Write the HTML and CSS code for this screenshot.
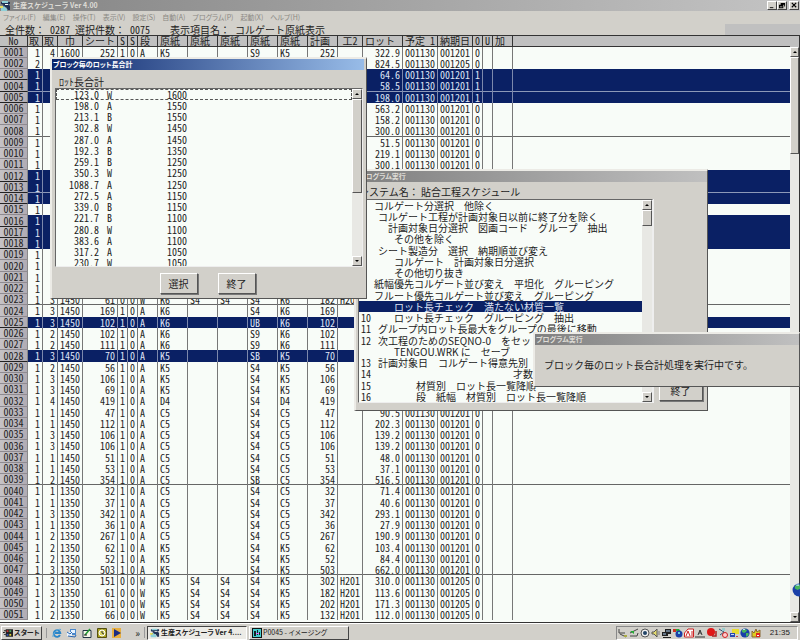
FILE: index.html
```html
<!DOCTYPE html>
<html lang="ja">
<head>
<meta charset="utf-8">
<title>生産スケジューラ Ver 4.00</title>
<link rel="stylesheet" href="styles.css">
</head>
<body>
<svg class="defs" aria-hidden="true">
  <symbol id="app" viewBox="0 0 11 10"><path fill="#235" d="M1 1h9v2H8l2 2v4H8L6 6 4 7 2 9H1V6l3-2-3-1z"/><path fill="#8fd0d8" d="M2 0h6v2H2zM1 7l3-2 3 3v2H1z"/><path fill="#e8e060" d="M0 5h3v2H0z"/><path fill="#fff" d="M5 3h3v1H5z"/></symbol>
  <symbol id="globe" viewBox="0 0 10 10"><circle cx="5" cy="5" r="4.6" fill="#1a3fa8"/><path fill="#49b45c" d="M2 2l3-1 2 1-1 2-2 1-2-1zM6 5l2 0 1 1-2 3-1-1z"/><path fill="#b8e0f0" d="M3 1h2v1H3z"/></symbol>
</svg>
<div class="app">
  <header class="titlebar">
    <svg class="logo"><use href="#app"/></svg>
    <h1>生産スケジューラ Ver 4.00</h1>
    <div class="winbtns">
      <button aria-label="最小化"><svg viewBox="0 0 9 8"><path d="M2 6h4v1H2z"/></svg></button>
      <button aria-label="元に戻す"><svg viewBox="0 0 9 8"><path d="M3 1h5v4H7V3H3zM1 3h5v4H1zM2 5v1h3V5z" fill-rule="evenodd"/></svg></button>
      <button aria-label="閉じる" class="close"><svg viewBox="0 0 9 8"><path d="M2 1l5 5M7 1L2 6" stroke="#000" stroke-width="1.3"/></svg></button>
    </div>
  </header>
  <nav class="menu">
    <button>ファイル(F)</button><button>編集(E)</button><button>操作(T)</button><button>表示(V)</button><button>設定(S)</button><button>自動(A)</button><button>プログラム(P)</button><button>起動(X)</button><button>ヘルプ(H)</button>
  </nav>
  <div class="info">
    <p><span>全件数：</span> <b>0287</b> <span>選択件数：</span> <b>0075</b> <span class="item">表示項目名：</span> <span>コルゲート原紙表示</span></p>
    <div class="patch"></div>
  </div>
  <main class="grid">
    <div class="tablebox">
      <table>
        <colgroup><col class="w28"><col class="w15"><col class="w15"><col class="w25"><col class="w35"><col class="w10"><col class="w10"><col class="w20"><col class="w30"><col class="w30"><col class="w30"><col class="w30"><col class="w30"><col class="w30"><col class="w25"><col class="w40"><col class="w35"><col class="w35"><col class="w10"><col class="w10"><col class="w20"><col></colgroup>
        <thead><tr><th class="c">No</th><th>取</th><th>取</th><th class="c">巾</th><th>シート</th><th>S</th><th>S</th><th>段</th><th>原紙</th><th>原紙</th><th>原紙</th><th>原紙</th><th>原紙</th><th>計画</th><th class="c">工２</th><th>ロット</th><th>予定 1</th><th>納期日</th><th>0</th><th>U</th><th>加</th><th></th></tr></thead>
        <tbody id="rows"></tbody>
      </table>
    </div>
    <div class="scroll main">
      <button class="up" aria-label="上へ"></button><div class="thumb"></div><div class="track"></div><button class="down" aria-label="下へ"></button>
    </div>
  </main>
  <footer class="taskbar">
    <button class="start"><svg viewBox="0 0 11 10"><path fill="#222" d="M0 4h2v1H0zM1 6h2v1H1zM1 2h2v1H1zM3 1l8 0v8l-8 0z"/><path fill="#c33" d="M4 2h2v2H4z"/><path fill="#4a6" d="M7 2h2v2H7z"/><path fill="#35b" d="M4 6h2v2H4z"/><path fill="#dc3" d="M7 6h2v2H7z"/></svg>スタート</button>
    <div class="quick">
      <svg viewBox="0 0 10 10"><path d="M8 7A3.3 3.3 0 1 1 8.300 5H3" fill="none" stroke="#2b86c8" stroke-width="1.800"/><path d="M1 9C0 6 6 0 9 1.500" fill="none" stroke="#58a8dc"/></svg>
      <svg viewBox="0 0 10 10"><path fill="#4a88cc" d="M3 1h6v6H3z"/><path fill="#e8f4ff" d="M4 2h4v3H4zM0 4h5v4H0z"/><path d="M0 4l3 2 2-2M1 8l7 1 1-2" fill="none" stroke="#2864b0"/></svg>
      <svg viewBox="0 0 10 10"><path fill="#f4f6e8" stroke="#234" d="M1 2.500h8v7H1z"/><path d="M3 7l5-6" stroke="#293" stroke-width="1.500"/><path d="M2 7h3" stroke="#222"/></svg>
      <svg viewBox="0 0 10 10"><path fill="#a8a020" stroke="#555010" d="M.5.5h9v9h-9z"/><circle cx="5" cy="5" r="3" fill="#d8d460" stroke="#fff"/><path d="M5 3v2l2 1" fill="none" stroke="#333"/></svg>
      <svg viewBox="0 0 10 10"><path fill="#e8b040" d="M0 0h9v10H0z"/><path fill="#1c2c80" d="M2 1l7 4-7 4z"/></svg>
    </div>
    <span class="more">»</span>
    <button class="task on"><svg viewBox="0 0 11 10"><use href="#app"/></svg>生産スケジューラ Ver 4....</button>
    <button class="task"><svg viewBox="0 0 10 10"><path fill="#111" d="M0 0h10v10H0z"/><path fill="#4cc" d="M1 1h8v8H1z"/><path fill="#122" d="M2 3h2v5H2zM5 2h1v5H5zM7 4h1v3H7z"/><path fill="#e6f" d="M4 5h3v1H4z"/></svg><span>P0045 - イメージング</span></button>
    <div class="tray">
      <svg viewBox="0 0 10 10"><path d="M1 1v4h6M2 6l6 3" fill="none" stroke="#444"/><path fill="#aa4" d="M6 7h3v2H6z"/></svg>
      <svg viewBox="0 0 10 10"><path d="M1 5l4-2 4-2M1 8h7l1-3" fill="none" stroke="#444"/><path fill="#2a3" d="M1 3l4 0 0 3z"/></svg>
      <svg viewBox="0 0 10 10"><circle cx="5" cy="5" r="4" fill="#eee" stroke="#555"/><circle cx="5" cy="5" r="2" fill="#246"/></svg>
      <svg viewBox="0 0 10 10"><path d="M1 4h2l3-3v8L3 6H1z" fill="#e6dd70" stroke="#555"/><path d="M8 3v4" stroke="#777"/></svg>
      <svg viewBox="0 0 10 10"><path fill="#222" d="M3 1h6v5H3zM0 4h6v4H0zM1 9h8v1H1z"/><path fill="#678" d="M4 2h4v2H4zM1 5h3v2H1z"/></svg>
      <svg viewBox="0 0 10 10"><path fill="#2a3" d="M2 1h4l3 4-3 2z"/><circle cx="6" cy="6" r="3.500" fill="#1a3fa8"/><path fill="#c32" d="M0 1h3v3H0z"/><path fill="#6cd" d="M5 4h2v2H5z"/></svg>
      <svg viewBox="0 0 10 10"><path fill="#fff" stroke="#c22" d="M.5 5L4 1h5.500v8h-9z"/><path d="M2 8l2-5 2 5M8 3v5" fill="none" stroke="#c22"/></svg>
      <svg viewBox="0 0 10 10"><path d="M3 7l2-5 2 5M4 5h2M0 9h10" fill="none" stroke="#333"/></svg>
      <svg viewBox="0 0 10 10"><circle cx="4" cy="4" r="4" fill="#e01818"/><path d="M9 3v5H5" fill="none" stroke="#a22" stroke-width="1.500"/></svg>
      <svg viewBox="0 0 10 10"><path d="M1 1l5 3-4 3" fill="none" stroke="#357"/><path fill="#9cc" d="M4 0h3v3H4z"/><circle cx="7" cy="7" r="2.500" fill="#fcc" stroke="#c22"/></svg>
      <svg viewBox="0 0 10 10"><path fill="#e8dc30" d="M3 1h7v5H3z"/><path fill="#2848b0" d="M1 5h5v4H1z"/><path fill="#cde" d="M2 6h3v1H2z"/><path fill="#c44" d="M7 8h2v1H7z"/></svg>
      <svg viewBox="0 0 10 10"><use href="#globe"/></svg>
      <svg viewBox="0 0 10 10"><path fill="#e0cc20" stroke="#863" d="M1 3l2 2 2-4 1 3 3-2v7H1z"/><path fill="#d22" d="M5 5h4v4H5z"/><path fill="#fff" d="M6 7h2v1H6z"/></svg>
      <time>21:35</time>
    </div>
  </footer>

  <section class="win exec" aria-label="プログラム実行">
    <h2 class="cap">プログラム実行</h2>
    <p class="sys">システム名： 貼合工程スケジュール</p>
    <div class="cols">
      <div class="listbox">
        <ol class="prog">
          <li class="i0">コルゲート分選択　他除く</li>
          <li class="i1">コルゲート工程が計画対象日以前に終了分を除く</li>
          <li class="i2">計画対象日分選択　図画コード　グループ　抽出</li>
          <li class="i3">その他を除く</li>
          <li class="i1">シート製造分　選択　納期順並び変え</li>
          <li class="i3">コルゲート　計画対象日分選択</li>
          <li class="i3">その他切り抜き</li>
          <li class="i0">紙幅優先コルゲート並び変え　平坦化　グルーピング</li>
          <li class="i0">フルート優先コルゲート並び変え　グルーピング</li>
          <li class="i3 sel">ロット長チェック　満たない材質一覧</li>
          <li class="i3"><i>10</i>ロット長チェック　グルーピング　抽出</li>
          <li class="i1"><i>11</i>グループ内ロット長最大をグループの最後に移動</li>
          <li class="i1"><i>12</i>次工程のためのSEQNO-0　をセッ</li>
          <li class="i3">TENGOU.WRK に　セーブ</li>
          <li class="i1"><i>13</i>計画対象日　コルゲート得意先別</li>
          <li class="i5"><i>14</i>才数</li>
          <li class="i4"><i>15</i>材質別　ロット長一覧降順</li>
          <li class="i4"><i>16</i>段　紙幅　材質別　ロット長一覧降順</li>
        </ol>
        <div class="scroll"><button class="up" aria-label="上へ"></button><div class="thumb"></div><div class="track"></div><button class="down" aria-label="下へ"></button></div>
      </div>
      <div class="side"><button class="btn">終了</button></div>
    </div>
  </section>

  <section class="win lots" aria-label="ブロック毎のロット長合計">
    <h2 class="cap active">ブロック毎のロット長合計</h2>
    <p class="lbl">ﾛｯﾄ長合計</p>
    <div class="listbox">
      <ul class="lotlist" id="lots"></ul>
      <div class="scroll"><button class="up" aria-label="上へ"></button><div class="thumb"></div><div class="track"></div><button class="down" aria-label="下へ"></button></div>
    </div>
    <div class="actions"><button class="btn">選択</button><button class="btn">終了</button></div>
  </section>

  <section class="win busy" aria-label="プログラム実行中">
    <h2 class="cap">プログラム実行</h2>
    <p>ブロック毎のロット長合計処理を実行中です。</p>
  </section>
  <svg class="ball" viewBox="0 0 10 10"><use href="#globe"/></svg>
</div>
<script src="data.js"></script>
</body>
</html>
```
FILE: data.js
```js
// Columns: take1, take2, width, sheet, S, S, flute, five papers, plan, work2, lot, planned, due, flag
const lines = `1,4,1600,252,1,0,A,K5,,,S9,K5,252,,322.9,001130,001201,0
2,,,,,,,,,,,,,,824.5,001130,001205,0
1,,,,,,,,,,,,,,64.6,001130,001201,1
1,,,,,,,,,,,,,,58.5,001130,001201,1
1,,,,,,,,,,,,,,198.0,001130,001201,1
1,,,,,,,,,,,,,,563.2,001130,001201,0
1,,,,,,,,,,,,,,158.2,001130,001201,0
1,,,,,,,,,,,,,,300.0,001130,001201,0
1,,,,,,,,,,,,,,51.5,001130,001201,0
1,,,,,,,,,,,,,,219.1,001130,001201,0
1,,,,,,,,,,,,,,300.1,001130,001201,0
1
1
1
1
1
1
1
1
1
1
1
1,3,1450,61,0,0,W,K6,S4,S4,S4,K6,182,H201
1,3,1450,169,1,0,A,K6,,,S4,K6,169
1,3,1450,102,1,0,A,K6,,,UB,K6,102
1,2,1450,102,1,0,A,K6,,,S9,K6,102
1,2,1450,111,1,0,A,K6,,,S9,K6,111
1,3,1450,70,1,0,A,K5,,,SB,K5,70
1,2,1450,56,1,0,A,K5,,,S4,K5,56
1,3,1450,106,1,0,A,K5,,,S4,K5,106
1,3,1450,69,1,0,A,K5,,,S4,K5,69
1,4,1450,419,1,0,A,D4,,,S4,D4,419
1,1,1450,47,1,0,A,C5,,,S4,C5,47,,90.5,001130,001201,0
1,1,1450,112,1,0,A,C5,,,S4,C5,112,,202.3,001130,001201,0
1,3,1450,106,1,0,A,C5,,,S4,C5,106,,139.2,001130,001201,0
1,3,1450,106,1,0,A,C5,,,S4,C5,106,,139.2,001130,001201,0
1,1,1450,51,1,0,A,C5,,,S4,C5,51,,48.0,001130,001201,0
1,1,1450,53,1,0,A,C5,,,S4,C5,53,,37.1,001130,001201,0
1,2,1450,354,1,0,A,C5,,,SB,C5,354,,516.5,001130,001201,0
1,1,1350,32,1,0,A,C5,,,S4,C5,32,,71.4,001130,001201,0
1,1,1350,37,1,0,A,C5,,,S4,C5,37,,40.6,001130,001201,0
1,3,1350,342,1,0,A,C5,,,S4,C5,342,,293.1,001130,001201,0
1,1,1350,36,1,0,A,C5,,,S4,C5,36,,27.9,001130,001201,0
1,2,1350,267,1,0,A,C5,,,S4,C5,267,,190.9,001130,001201,0
1,2,1350,62,1,0,A,K5,,,S4,K5,62,,103.4,001130,001201,0
1,2,1350,52,1,0,A,K5,,,S4,K5,52,,84.4,001130,001201,0
1,3,1350,503,1,0,A,K5,,,S4,K5,503,,662.0,001130,001201,0
1,2,1350,151,0,0,W,K5,S4,S4,S4,K5,302,H201,310.0,001130,001205,0
1,3,1350,61,0,0,W,K5,S4,S4,S4,K5,182,H201,113.6,001130,001205,0
1,2,1350,101,0,0,W,K5,S4,S4,S4,K5,202,H201,171.3,001130,001205,0
1,2,1350,66,0,0,W,K5,S4,S4,S4,K5,132,H201,112.0,001130,001205,0`.split('\n');
const selected = [3, 4, 5, 12, 13, 14, 16, 17, 18, 25, 28];
const ruled = [4, 8, 13, 23, 39, 47];
const right = [0, 1, 2, 3, 12, 14];
const center = [4, 5, 17];
document.getElementById('rows').innerHTML = lines.map((line, n) => {
  const v = line.split(',');
  let cells = '';
  for (let i = 0; i < 21; i++) {
    const cls = right.includes(i) ? 'r' : center.includes(i) ? 'c' : 'l';
    cells += `<td class="${cls}">${v[i] || ''}</td>`;
  }
  const cls = (selected.includes(n + 1) ? 'sel ' : '') + (ruled.includes(n + 1) ? 'rule' : '');
  return `<tr class="${cls}"><th scope="row">${String(n + 1).padStart(4, '0')}</th>${cells}</tr>`;
}).join('');

const lots = '123.0 W 1600,198.0 A 1550,213.1 B 1550,302.8 W 1450,287.0 A 1450,192.3 B 1350,259.1 B 1250,350.3 W 1250,1088.7 A 1250,272.5 A 1150,339.0 B 1150,221.7 B 1100,280.8 W 1100,383.6 A 1100,317.2 A 1050,230.7 W 1050';
document.getElementById('lots').innerHTML = lots.split(',').map(t => {
  const [a, b, c] = t.split(' ');
  return `<li><span>${a}</span><span>${b}</span><span>${c}</span></li>`;
}).join('');
```
FILE: styles.css
```css
:root {
  --face: #d2d0ca;
  --navy: #0a2064;
  --paper: #f8fcf8;
  --jp: "Noto Sans CJK JP", sans-serif;
}
* { box-sizing: border-box; }
body { margin: 0; font: 10px/11px var(--jp); color: #222; }
button { font: inherit; color: inherit; border: 0; padding: 0; margin: 0; background: none; }
h1, h2, p, ul, ol { margin: 0; padding: 0; font-size: inherit; }
ul, ol { list-style: none; }
b, i { font: 10px/11px var(--jp); font-feature-settings: "hwid"; }
.defs { position: absolute; width: 0; height: 0; }
.app { position: relative; height: 100vh; overflow: hidden; display: flex; flex-direction: column; background: var(--face); }

.titlebar { display: flex; align-items: center; height: 11px; background: linear-gradient(90deg, #848484, #c4c4c4); color: #dedcd6; }
.logo { width: 11px; height: 10px; margin-right: 2px; }
.titlebar h1 { font: bold 7px/11px var(--jp); flex: 1; }
.winbtns { display: flex; padding-right: 1px; }
.winbtns button { width: 10px; height: 9px; background: var(--face); border: 1px solid; border-color: #fff #444 #444 #fff; display: flex; }
.winbtns svg { width: 8px; height: 7px; }
.winbtns .close { margin-left: 2px; }

.menu { display: flex; gap: 7px; padding-left: 3px; height: 13px; font-size: 7px; line-height: 13px; color: #8a8883; font-feature-settings: "palt"; white-space: nowrap; }
.info { display: flex; height: 11px; justify-content: space-between; }
.info p { padding-left: 5px; display: flex; gap: 5px; white-space: nowrap; }
.info .item { padding-left: 15px; }
.patch { width: 75px; background: #c0c0c0; }

.grid { flex: 1; min-height: 0; display: flex; background: var(--paper); border-top: 1px solid #333; border-bottom: 1px solid #333; }
.tablebox { flex: 1; overflow: hidden; }
table { width: 100%; table-layout: fixed; border-collapse: separate; border-spacing: 0; font: 10px/10px var(--jp); font-feature-settings: "hwid"; }
.w10 { width: 10px; } .w15 { width: 15px; } .w20 { width: 20px; } .w25 { width: 25px; } .w28 { width: 28px; }
.w30 { width: 30px; } .w35 { width: 35px; } .w40 { width: 40px; }
th, td { padding: 0 2px; white-space: nowrap; font-weight: normal; border-right: 1px solid #777; text-align: left; }
td:last-child, thead th:last-child { border-right: 0; }
thead th { height: 11px; background: #c0c0c0; border-bottom: 1px solid #333; border-right-color: #333; padding: 0 2px; }
thead th:nth-child(-n+3) { padding: 0 1px; }
th.c, td.c { text-align: center; padding: 0; }
td.r { text-align: right; }
tbody tr { height: 11px; }
tbody tr:nth-child(4n) { height: 12px; }
tbody th { background: linear-gradient(90deg, #c6c2c6, #b0acb4); border-right-color: #888; border-bottom: 1px solid #8e8a90; text-align: center; line-height: 10px; }
tbody .sel { background: var(--navy); color: #dfe4f4; }
tbody .sel th { color: #222; border-bottom-color: #222; }
.sel td { border-right-color: #7c88ac; }
.rule td { box-shadow: inset 0 -1px #666; }
.sel.rule td { box-shadow: inset 0 -1px #8c98b8; }

.scroll { width: 10px; flex: none; display: flex; flex-direction: column; background: #e8e8e4; }
.scroll.main { border-right: 1px solid #333; padding-top: 11px; background: linear-gradient(#c0c0c0 11px, #e8e8e4 11px); }
.scroll button, .thumb { background: var(--face); border: 1px solid; border-color: #fff #555 #555 #fff; }
.scroll button { height: 10px; display: grid; place-items: center; }
.scroll button::before { content: ""; border: 2px solid transparent; border-top: 0; border-bottom: 2px solid #000; }
.scroll .down::before { border-bottom: 0; border-top: 2px solid #000; }
.track { flex: 1; }
.main .thumb { height: 97px; }

.taskbar { display: flex; align-items: center; height: 17px; padding: 2px 2px 1px 1px; border-top: 1px solid #fff; font-size: 7px; font-feature-settings: "palt"; }
.taskbar svg { width: 10px; height: 10px; flex: none; }
.start, .task { height: 14px; display: flex; align-items: center; border: 1px solid; border-color: #fff #444 #444 #fff; white-space: nowrap; }
.start { width: 41px; padding-left: 1px; gap: 1px; font-weight: bold; }
.quick { display: flex; gap: 5px; margin-left: 4px; padding-left: 5px; border-left: 1px solid #999; }
.more { width: 17px; margin: 0 2px 0 6px; font-size: 10px; text-align: right; border-right: 1px solid #999; padding-right: 4px; }
.task { width: 100px; padding-left: 2px; gap: 1px; margin-right: 2px; }
.task.on { border-color: #444 #fff #fff #444; background: #ecebe6; font-weight: bold; }
.tray { margin-left: auto; width: 182px; height: 14px; display: flex; align-items: center; justify-content: space-between; padding: 0 7px 0 1px; border: 1px solid; border-color: #888 #fff #fff #888; }
.tray time { margin-left: 8px; font: 8px/12px "Liberation Sans", sans-serif; }

.win { position: absolute; background: var(--face); border: 2px solid; border-color: #ecebe6 #555 #555 #ecebe6; border-right-width: 1px; border-bottom-width: 1px; }
.cap { height: 11px; padding-left: 1px; font: bold 7px/11px var(--jp); color: #dedcd6; background: linear-gradient(90deg, #808080, #c0c0c0); white-space: nowrap; font-feature-settings: "palt"; }
.cap.active { background: linear-gradient(90deg, #0a246a, #98bce8); color: #fff; }
.listbox { display: flex; overflow: hidden; background: var(--paper); border: 1px solid; border-color: #666 #eee #eee #666; }
.listbox ul, .listbox ol { flex: 1; }
.listbox li { height: 11px; line-height: 11px; white-space: nowrap; }
.listbox li:nth-child(4n) { height: 12px; }
.btn { background: var(--face); border: 1px solid; border-color: #fff #555 #555 #fff; box-shadow: 1px 1px #777; height: 21px; }

.lots { left: 50px; top: 57px; width: 317px; height: 242px; display: flex; flex-direction: column; padding-right: 3px; }
.lots .cap { margin-right: -1px; }
.lbl { padding: 6px 0 1px 7px; }
.lots .listbox { height: 179px; margin: 0 0 0 3px; }
.lotlist { font-feature-settings: "hwid"; }
.lotlist li { display: grid; grid-template-columns: 43px 52px 1fr; column-gap: 8px; }
.lotlist li span:first-child { text-align: right; }
.lotlist li:first-child { outline: 1px dashed #555; outline-offset: -1px; }
.lots .thumb { height: 94px; }
.actions { display: flex; gap: 20px; justify-content: center; padding-top: 6px; }
.actions .btn { width: 38px; }

.exec { left: 354px; top: 169px; width: 354px; height: 242px; padding-left: 2px; }
.sys { padding: 4px 0 2px 1px; }
.exec .cols { display: flex; }
.exec .listbox { width: 295px; height: 204px; }
.prog li { position: relative; }
.prog i { position: absolute; left: 2px; }
.prog .sel { background: var(--navy); color: #dfe4f4; }
.i0 { padding-left: 15px; } .i1 { padding-left: 19px; } .i2 { padding-left: 29px; } .i3 { padding-left: 35px; }
.i4 { padding-left: 57px; } .i5 { padding-left: 154px; }
.exec .thumb { height: 16px; }
.side { flex: 1; display: flex; align-items: flex-end; justify-content: center; border-left: 1px solid #eee; padding-bottom: 2px; }
.side .btn { width: 44px; }

.busy { left: 533px; right: 0; top: 332px; height: 55px; }
.busy p { padding: 14px 0 0 9px; }
.ball { position: absolute; right: -6px; top: 583px; width: 14px; height: 14px; }
```
